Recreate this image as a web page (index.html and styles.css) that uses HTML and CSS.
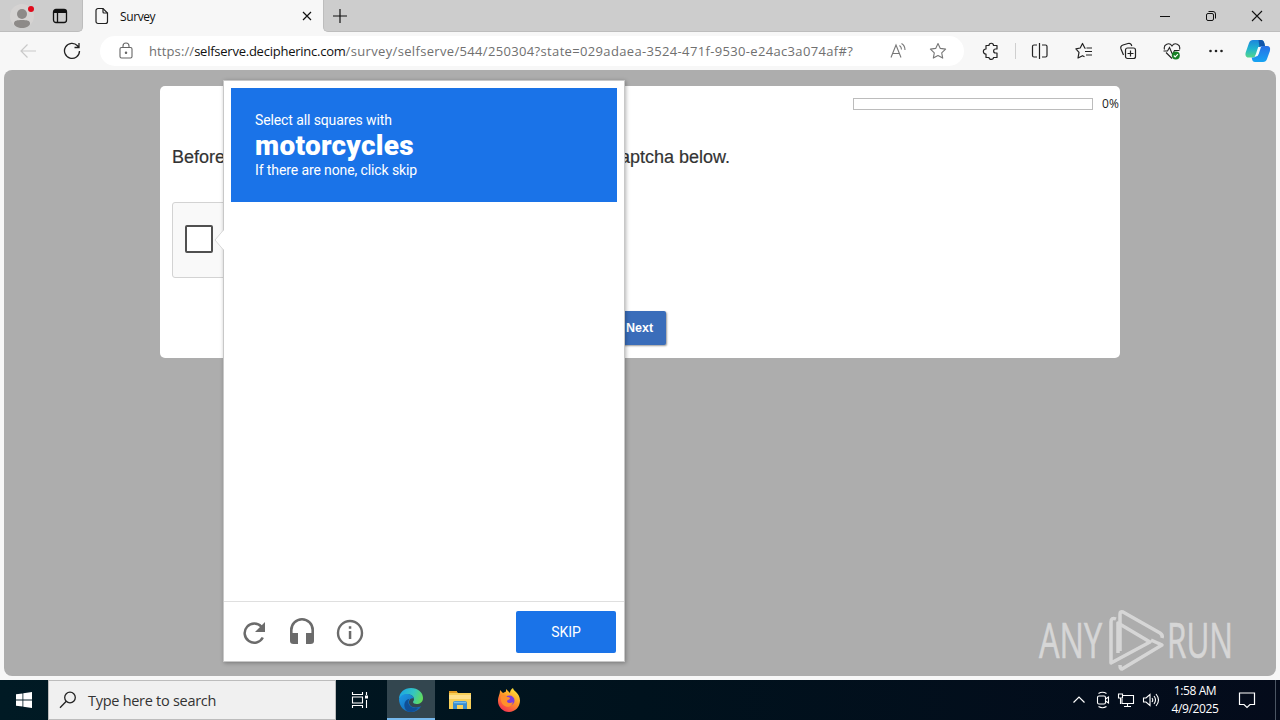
FILE: index.html
```html
<!DOCTYPE html>
<html lang="en">
<head>
    <meta charset="UTF-8">
    <meta name="viewport" content="width=device-width, initial-scale=1.0">
    <title>Survey</title>
    <link rel="stylesheet" href="styles.css">
</head>
<body>
<div class="screen">

    <div class="tabbar">
        <div class="tab-left">
            <svg class="profile" width="28" height="30" viewBox="0 0 28 30">
                <circle cx="14" cy="15" r="12" fill="#d5d3d2"/>
                <circle cx="14" cy="13" r="5" fill="#8d8a88"/>
                <path d="M6 22.500C6 19.500 9 19 14 19s8 .5 8 3.500c0 2.500-4 4.500-8 4.500s-8-2-8-4.500z" fill="#8d8a88"/>
                <circle cx="23" cy="8" r="3" fill="#e00b1c"/>
            </svg>
            <svg width="16" height="16" viewBox="0 0 16 16" fill="none" stroke="#111" stroke-width="1.300">
                <rect x="1.500" y="1.500" width="13" height="13" rx="2.500"/>
                <path d="M2 3.500h12" stroke-width="3"/>
                <path d="M5.500 4v10"/>
            </svg>
        </div>
        <div class="tab">
            <svg width="14" height="18" viewBox="0 0 14 18" fill="none" stroke="#222" stroke-width="1.200">
                <path d="M3 1.500h5l4.500 4.500v8.500a2 2 0 0 1-2 2H3a2 2 0 0 1-2-2v-11a2 2 0 0 1 2-2z"/>
                <path d="M8 1.500V5a1 1 0 0 0 1 1h3.500"/>
            </svg>
            <span class="tab-title">Survey</span>
            <svg width="10" height="10" viewBox="0 0 10 10" stroke="#111" stroke-width="1.200"><path d="M1 1l8 8M9 1l-8 8"/></svg>
        </div>
        <div class="tab-rest">
            <svg class="new-tab" width="14" height="14" viewBox="0 0 14 14" stroke="#111" stroke-width="1.200"><path d="M7 0v14M0 7h14"/></svg>
            <div class="window-buttons">
                <svg width="12" height="12" viewBox="0 0 12 12" stroke="#111"><path d="M1 6.500h10"/></svg>
                <svg width="12" height="12" viewBox="0 0 12 12" fill="none" stroke="#111"><rect x="1.500" y="3.500" width="7" height="7" rx="1.500"/><path d="M3.500 1.500h4.500a2.500 2.500 0 0 1 2.500 2.500v4.500"/></svg>
                <svg width="12" height="12" viewBox="0 0 12 12" stroke="#111" stroke-width="1.100"><path d="M1 1l10 10M11 1L1 11"/></svg>
            </div>
        </div>
    </div>

    <div class="toolbar">
        <div class="tool"><svg width="18" height="18" viewBox="0 0 18 18" fill="none" stroke="#c9c9c9" stroke-width="1.200"><path d="M17 9H2M8.500 2.500L2 9l6.500 6.500"/></svg></div>
        <div class="tool"><svg width="18" height="18" viewBox="0 0 18 18" fill="none" stroke="#222" stroke-width="1.300"><path d="M16.500 9A7.500 7.500 0 1 1 14.500 3.800L16 5.500M16 1v4.500h-4.500"/></svg></div>
        <div class="address">
            <svg width="14" height="17" viewBox="0 0 14 17" fill="none" stroke="#666" stroke-width="1.100"><rect x="1" y="5.500" width="12" height="10.500" rx="1.500"/><path d="M4 5.500V4a3 3 0 0 1 6 0v1.500"/><circle cx="7" cy="10.700" r=".7" fill="#666"/></svg>
            <div class="url"><span class="url-scheme">https://</span><span class="url-host">selfserve.decipherinc.com</span><span class="url-path">/survey/selfserve/544/250304?state=029adaea-3524-471f-9530-e24ac3a074af#?</span></div>
            <svg class="read" width="18" height="18" viewBox="0 0 18 18" fill="none" stroke="#777" stroke-width="1.100"><path d="M2 15.500L7 3l5 12.500M3.700 11.500h6.600M10.500 3.500q2 1.500 2 4M12.500 1.500q3.500 2 3.500 6.500"/></svg>
            <svg class="star" width="18" height="18" viewBox="0 0 18 18" fill="none" stroke="#777" stroke-width="1.100" stroke-linejoin="round"><path d="M9 1.500l2.300 4.900 5.300.7-3.900 3.700 1 5.300L9 13.500l-4.700 2.600 1-5.300L1.400 7.100l5.300-.7z"/></svg>
        </div>
        <div class="tool first"><svg width="18" height="18" viewBox="0 0 18 18" fill="none" stroke="#222" stroke-width="1.200" stroke-linejoin="round"><path d="M4 3.500h3c0-3 4.500-3 4.500 0H15V7h-1.500c-2.500 0-2.500 4 0 4H15v4.500h-3.500c0 2.500-4.500 2.500-4.500 0H4V12C.500 12 .500 7 4 7z"/></svg></div>
        <div class="divider"></div>
        <div class="tool"><svg width="18" height="18" viewBox="0 0 18 18" fill="none" stroke="#222" stroke-width="1.200"><path d="M8.500 1v16M6 3H3a1.500 1.500 0 0 0-1.500 1.500v9A1.500 1.500 0 0 0 3 15h3M11 3h3.500A1.500 1.500 0 0 1 16 4.500v9a1.500 1.500 0 0 1-1.500 1.500H11"/></svg></div>
        <div class="tool"><svg width="18" height="18" viewBox="0 0 18 18" fill="none" stroke="#222" stroke-width="1.200" stroke-linejoin="round"><path d="M10.500 6.500L9.800 6 7.500 1.500 5.200 6 .9 6.800 4 10.300l-1 5.700 4.500-2.300 2 1M11.500 6H17M10 9.500h7M11 13h6"/></svg></div>
        <div class="tool"><svg width="18" height="18" viewBox="0 0 18 18" fill="none" stroke="#222" stroke-width="1.200"><rect x="6.500" y="6" width="10" height="10.500" rx="2"/><path d="M11.500 8.500v6M8.500 11.500h6M4.500 13L2 7Q1 4 4 3l5-1.500q3-.8 3.800 2.500"/></svg></div>
        <div class="tool"><svg width="18" height="18" viewBox="0 0 18 18" fill="none" stroke="#222" stroke-width="1.100"><path d="M1.500 7.500C0 2 6.500 0 9 4c2.500-4 9-2 7.500 3.500M3 10.500l6 6M.500 9h4l2-3.500 3 7 2-4h5"/><circle cx="12.800" cy="13.500" r="4" fill="#168025" stroke="none"/><path d="M10.800 13.500l1.400 1.400 2.700-2.800" stroke="#fff"/></svg></div>
        <div class="tool"><svg width="18" height="18" viewBox="0 0 18 18" fill="#222"><circle cx="3.500" cy="9" r="1.300"/><circle cx="9" cy="9" r="1.300"/><circle cx="14.500" cy="9" r="1.300"/></svg></div>
        <div class="tool copilot">
            <svg width="26" height="24" viewBox="0 0 26 24">
                <defs>
                    <linearGradient id="cp1" x1="0" y1="0" x2="0" y2="1"><stop offset="0" stop-color="#1d86dc"/><stop offset=".5" stop-color="#20b4cf"/><stop offset="1" stop-color="#55d68b"/></linearGradient>
                    <linearGradient id="cp2" x1="0" y1="0" x2="0" y2="1"><stop offset="0" stop-color="#2870e6"/><stop offset="1" stop-color="#16a4f2"/></linearGradient>
                </defs>
                <path d="M8 1h8q2.500 0 3.300 3l.7 3h-2.500q-3 0-4 3l-2 6q-.8 2.500-3.500 2.500H4q-4.500 0-3.300-5L4 4Q5 1 8 1z" fill="url(#cp1)"/>
                <path d="M18 23h-8q-2.500 0-3-3l-.3-1.500H8q3 0 4-3l2-6Q15 7 17.500 7H22q4 0 2.900 5L22 20q-1 3-4 3z" fill="url(#cp2)"/>
                <path d="M13.500 1H16q2.500 0 3.300 3l.7 3h-2.500q-2 0-3 1.300z" fill="#1356a9"/>
                <path d="M13.200 8H16l-2.300 7q-.8 2.500-3 2.500H9.500q.8-.8 1.200-2z" fill="#f5fbff"/>
            </svg>
        </div>
    </div>

    <div class="page">
        <div class="survey">
            <div class="progress">
                <div class="progress-bar"></div>
                <span>0%</span>
            </div>
            <div class="question"><span>Before</span><span>captcha below.</span></div>
            <div class="recaptcha"><div class="checkbox"></div></div>
            <div class="buttons"><div class="next">Next</div></div>
        </div>

        <div class="challenge">
            <svg class="arrow" width="10" height="20" viewBox="0 0 10 20"><path d="M10 0L1 10l9 10z" fill="#fff"/><path d="M9.500 0L1 10l8.500 10" fill="none" stroke="#d9d9d9"/></svg>
            <div class="challenge-head">
                <div>Select all squares with</div>
                <strong>motorcycles</strong>
                <div>If there are none, click skip</div>
            </div>
            <div class="challenge-body"></div>
            <div class="challenge-foot">
                <svg width="32" height="32" viewBox="0 0 32 32"><path d="M24.800 20.500A9.600 9.600 0 1 1 23.500 9.800" fill="none" stroke="#6b6b6b" stroke-width="2.500"/><path d="M27 5v10H17z" fill="#6b6b6b"/></svg>
                <svg width="32" height="32" viewBox="0 0 32 32"><path d="M5.300 17v-4a10.700 10.700 0 0 1 21.400 0v4" fill="none" stroke="#6b6b6b" stroke-width="2.600"/><path d="M4 16h8v11H7.500Q4 27 4 24zM20 16h8v8q0 3-3.500 3H20z" fill="#6b6b6b"/></svg>
                <svg width="32" height="32" viewBox="0 0 32 32"><circle cx="16" cy="16" r="12" fill="none" stroke="#6b6b6b" stroke-width="2.400"/><path d="M14.800 14h2.500v8h-2.500zM14.800 9.300h2.500v2.500h-2.500z" fill="#6b6b6b"/></svg>
                <div class="skip">SKIP</div>
            </div>
        </div>

        <div class="watermark">
            <svg width="206" height="84" viewBox="0 -10 206 84">
                <g class="wm-text">
                    <text x="2" y="50" textLength="63" lengthAdjust="spacingAndGlyphs">ANY</text>
                    <text x="130" y="50" textLength="66" lengthAdjust="spacingAndGlyphs">RUN</text>
                </g>
                <g fill="none" stroke="#dedede" stroke-width="3.500" stroke-linejoin="round">
                    <path d="M79 11q-5-2-5 3v41l39-21-32-19v30"/>
                    <path d="M83 43V6q0-3 3-2l37 21q3 2 2 5"/>
                    <path d="M121 35l4 2-40 24q-2 0-2-4M114 32l11 5"/>
                </g>
            </svg>
        </div>
    </div>

    <div class="taskbar">
        <div class="start">
            <svg width="16" height="16" viewBox="0 0 16 16" fill="#fff"><path d="M0 2.300L6.500 1.400v6.100H0zM7.300 1.300L16 0v7.500H7.300zM0 8.400h6.500v6.200L0 13.700zM7.300 8.400H16V16l-8.700-1.300z"/></svg>
        </div>
        <div class="search">
            <svg width="18" height="18" viewBox="0 0 18 18" fill="none" stroke="#222" stroke-width="1.300"><circle cx="11" cy="6.500" r="5.300"/><path d="M7.300 10.200L1 16.700"/></svg>
            <span>Type here to search</span>
        </div>
        <div class="task">
            <svg width="18" height="16" viewBox="0 0 18 16" fill="none" stroke="#fff" stroke-width="1.100"><path d="M1.500 0v2.500h10V0M1.500 16v-2.500h10V16M1.500 5h10v6h-10zM15.500 0v3M15.500 8v8"/><path d="M14 3.500h3v3h-3z" fill="#fff" stroke="none"/></svg>
        </div>
        <div class="task active">
            <svg width="24" height="24" viewBox="0 0 24 24">
                <defs>
                    <linearGradient id="edgeTop" x1="0" y1=".3" x2="1" y2=".6"><stop offset="0" stop-color="#1aa5e5"/><stop offset=".55" stop-color="#34c5c1"/><stop offset="1" stop-color="#62dc58"/></linearGradient>
                    <linearGradient id="edgeLow" x1="0" y1="0" x2="1" y2="1"><stop offset="0" stop-color="#1c9be8"/><stop offset="1" stop-color="#135ba8"/></linearGradient>
                </defs>
                <path d="M0 11C0 4.500 5.500 0 12 0c7 0 12 4.500 12 10 0 4-3 6-6.500 6-2 0-3.500-.8-3.500-2 0-.7 1-1.200 1-3 0-2.500-2.500-4.500-6-4.500-4 0-7.500 2-9 4.500z" fill="url(#edgeTop)"/>
                <path d="M0 11c1.500-4 5-5.500 9-5 3.500.5 5.500 2.500 6 4.500-2-1-4.500 0-5 3-.500 4.500 5 8 12.300 4.500C20 22 16.500 24 12 24 5 24 0 18 0 11z" fill="url(#edgeLow)"/>
                <path d="M8.500 23.500C4 20 4 12 10.500 10.700 8 14 9.500 21 19 19.800 18 22 15 24 12 24z" fill="#104f96"/>
            </svg>
        </div>
        <div class="task explorer">
            <svg width="22" height="20" viewBox="0 0 22 20"><path d="M0 1h7l2 2h13v16H0z" fill="#f7cf58"/><path d="M0 1h8v2H0z" fill="#e19a20"/><path d="M0 5h22v4H0z" fill="#ffe08b"/><path d="M4 19v-6q0-2 2-2h10q2 0 2 2v6h-4v-4H8v4z" fill="#3a8dcd"/><path d="M5 12.500h12" stroke="#75bcec" stroke-width="1.500"/></svg>
        </div>
        <div class="task">
            <svg width="24" height="24" viewBox="0 0 24 24">
                <defs><linearGradient id="fox" x1=".8" y1="0" x2=".2" y2="1"><stop offset="0" stop-color="#ffec3c"/><stop offset=".45" stop-color="#ff9827"/><stop offset="1" stop-color="#f32a55"/></linearGradient></defs>
                <path d="M3 2l3 3 3-1.500V1l4 4c0-2 1-4 3-5 0 3 7 5 7 12.500C23 19 18 24 12 24S1 19 1 13C1 8 3 7 3 2z" fill="url(#fox)"/>
                <circle cx="12.500" cy="12.500" r="5" fill="#7b3edb"/>
                <path d="M4 8c3-2 5-1 6 1 2 0 3 .5 3 1.500-1 2-3 1-3 3 1 2 4 2 6 .5-1 4-4 5.500-7 4.500-4-1-6-6-5-10.500z" fill="#ff902c"/>
            </svg>
        </div>
        <div class="tray">
            <svg width="14" height="10" viewBox="0 0 14 10" fill="none" stroke="#fff" stroke-width="1.200"><path d="M1.500 7.500L7 2l5.500 5.500"/></svg>
            <svg class="camera" width="14" height="18" viewBox="0 0 14 18" fill="none" stroke="#fff" stroke-width="1.100"><rect x="1.500" y="5" width="8" height="8" rx="1.500"/><path d="M9.500 8l3-2v6l-3-2M2.500 2.500q4-2.500 8 0M2.500 15.500q4 2.500 8 0"/></svg>
            <svg width="18" height="16" viewBox="0 0 18 16" fill="none" stroke="#fff" stroke-width="1.100"><path d="M6 3.500h10.500v8H5V7M10.500 11.500v3M7 14.500h7"/><path d="M1.500 2h4v4h-4zM3.500 6v6"/></svg>
            <svg width="18" height="16" viewBox="0 0 18 16" fill="none" stroke="#fff" stroke-width="1.100"><path d="M1.500 6H4l4-3.500v11L4 10H1.500zM10 6q1.500 2 0 4M12 4q3 4 0 8M14 2q5 6 0 12"/></svg>
        </div>
        <div class="clock"><div>1:58 AM</div><div>4/9/2025</div></div>
        <svg class="notice" width="18" height="18" viewBox="0 0 18 18" fill="none" stroke="#fff" stroke-width="1.200"><path d="M1.500 2h15v11.500H12l-3 3-3-3H1.500z"/></svg>
        <div class="show-desktop"></div>
    </div>

</div>
</body>
</html>
```
FILE: styles.css
```css
body {
    margin: 0;
    font-family: 'Open Sans', 'Noto Sans', sans-serif;
    color: #222;
}

svg {
    display: block;
    flex: none;
}

.screen {
    width: 1280px;
    height: 720px;
    overflow: hidden;
    display: flex;
    flex-direction: column;
    background-color: #f7f7f7;
}

/* tab strip */
.tabbar {
    height: 32px;
    display: flex;
    align-items: center;
    background-color: #f7f7f7;
}

.tab-left {
    box-sizing: border-box;
    width: 83px;
    height: 32px;
    padding-left: 8px;
    display: flex;
    align-items: center;
    gap: 16px;
    background-color: #cdcdcd;
    border-bottom: 1px solid #bdbdbd;
    border-right: 1px solid #bdbdbd;
    border-radius: 0 0 5px 0;
}

.tab {
    box-sizing: border-box;
    width: 240px;
    height: 32px;
    padding: 0 11px 0 12px;
    display: flex;
    align-items: center;
}

.tab-title {
    flex: 1;
    margin-left: 11px;
    font-size: 12px;
    letter-spacing: -0.4px;
    color: #111;
}

.tab-rest {
    box-sizing: border-box;
    flex: 1;
    height: 32px;
    padding-left: 9px;
    display: flex;
    align-items: center;
    background-color: #cdcdcd;
    border-left: 1px solid #bdbdbd;
    border-bottom: 1px solid #bdbdbd;
    border-radius: 0 0 0 5px;
}

.window-buttons {
    margin-left: auto;
    width: 138px;
    display: flex;
    justify-content: space-around;
}

/* toolbar */
.toolbar {
    height: 38px;
    padding: 0 0 1px 6px;
    display: flex;
    align-items: center;
    box-sizing: border-box;
}

.tool {
    width: 44px;
    display: flex;
    justify-content: center;
}

.tool.first {
    margin-left: 5px;
}

.tool.copilot {
    width: 40px;
}

.divider {
    width: 1px;
    height: 16px;
    margin: 0 2px;
    background-color: #cfcfcf;
}

.address {
    box-sizing: border-box;
    width: 864px;
    height: 30px;
    margin-left: 6px;
    padding: 0 17px 0 19px;
    display: flex;
    align-items: center;
    background-color: #fff;
    border-radius: 15px;
}

.url {
    flex: 1;
    margin-left: 16px;
    font-size: 13px;
    white-space: nowrap;
    color: #707070;
}

.url-host {
    letter-spacing: -0.24px;
    color: #111;
}

.url-scheme {
    letter-spacing: 0.1px;
}

.url-path {
    letter-spacing: 0.34px;
}

.star {
    margin-left: 22px;
}

/* page */
.page {
    position: relative;
    box-sizing: border-box;
    height: 606px;
    margin: 0 4px 4px;
    padding-top: 16px;
    background-color: #adadad;
    border-radius: 8px;
}

.survey {
    box-sizing: border-box;
    width: 960px;
    height: 272px;
    margin: 0 auto;
    padding: 10px 0 0 12px;
    background-color: #fff;
    border-radius: 5px;
}

.progress {
    height: 16px;
    display: flex;
    align-items: center;
    justify-content: flex-end;
    gap: 9px;
    font-size: 12px;
}

.progress span {
    width: 18px;
    padding-bottom: 2px;
    letter-spacing: 0.2px;
    white-space: nowrap;
}

.progress-bar {
    box-sizing: border-box;
    width: 240px;
    height: 12px;
    border: 1px solid #bcbcbc;
}

.question {
    width: 558px;
    margin-top: 34px;
    display: flex;
    justify-content: space-between;
    font: 18px/22px 'Liberation Sans', Arial, sans-serif;
    color: #333;
    -webkit-text-stroke: 0.2px #333;
}

.recaptcha {
    box-sizing: border-box;
    width: 304px;
    height: 76px;
    margin-top: 34px;
    padding: 22px 12px;
    background-color: #f9f9f9;
    border: 1px solid #d3d3d3;
    border-radius: 3px;
}

.checkbox {
    box-sizing: border-box;
    width: 28px;
    height: 28px;
    background-color: #fff;
    border: 2px solid #505050;
    border-radius: 2px;
}

.buttons {
    margin-top: 33px;
    padding-right: 13px;
    display: flex;
    justify-content: center;
}

.next {
    width: 53px;
    height: 34px;
    font: bold 12.500px/35px 'Liberation Sans', Arial, sans-serif;
    text-align: center;
    color: #fff;
    background-color: #3a6dba;
    border-radius: 2px;
    box-shadow: 1px 1px 2px rgba(0, 0, 0, 0.4);
}

/* captcha popup over the page */
.challenge {
    position: absolute;
    box-sizing: border-box;
    left: 219px;
    top: 10px;
    width: 402px;
    height: 582px;
    display: flex;
    flex-direction: column;
    background-color: #fff;
    border: 1px solid #c8c8c8;
    box-shadow: 1px 1px 4px rgba(0, 0, 0, 0.3);
    font-family: Roboto, sans-serif;
}

.arrow {
    position: absolute;
    left: -10px;
    top: 149px;
}

.challenge-head {
    box-sizing: border-box;
    height: 114px;
    margin: 7px 7px 0;
    padding: 24px;
    font-size: 14px;
    line-height: 16px;
    letter-spacing: -0.11px;
    color: #fff;
    background-color: #1a73e8;
}

.challenge-head strong {
    display: block;
    font-size: 28px;
    font-weight: 900;
    line-height: 34px;
    padding-top: 1px;
    margin-bottom: -1px;
    letter-spacing: 0.27px;
}

.challenge-body {
    flex: 1;
}

.challenge-foot {
    box-sizing: border-box;
    height: 60px;
    padding: 0 8px 0 14px;
    display: flex;
    align-items: center;
    gap: 16px;
    border-top: 1px solid #dfdfdf;
}

.challenge-foot svg {
    margin-top: 2px;
}

.skip {
    width: 100px;
    height: 42px;
    margin-left: auto;
    font-size: 14px;
    line-height: 42px;
    text-align: center;
    color: #fff;
    background-color: #1a73e8;
    border-radius: 2px;
}

.watermark {
    position: absolute;
    left: 1033px;
    top: 528px;
    opacity: 0.85;
}

.wm-text {
    font-family: 'Open Sans', sans-serif;
    font-size: 50px;
    fill: #dedede;
    stroke: #dedede;
    stroke-width: 0.7px;
}

/* taskbar */
.taskbar {
    height: 40px;
    display: flex;
    align-items: center;
    background: linear-gradient(to right, #001a24, #00121d 50%, #040b1b);
    color: #fff;
}

.start {
    width: 48px;
    display: flex;
    justify-content: center;
}

.search {
    box-sizing: border-box;
    width: 288px;
    height: 40px;
    padding-left: 10px;
    display: flex;
    align-items: center;
    gap: 11px;
    font-size: 14.500px;
    letter-spacing: -0.28px;
    color: #333;
    background-color: #f0f0f0;
    border: 1px solid #bcbcbc;
}

.task {
    box-sizing: border-box;
    width: 48px;
    height: 40px;
    display: flex;
    align-items: center;
    justify-content: center;
}

.task.active {
    margin-left: 3px;
    padding-top: 2px;
    background-color: #33464f;
    border-bottom: 2px solid #76b9ed;
}

.explorer {
    margin: 0 1px;
}

.tray {
    margin-left: auto;
    display: flex;
    align-items: center;
    gap: 7px;
}

.camera {
    margin-left: 3px;
}

.clock {
    width: 50px;
    margin-left: 10px;
    font-size: 12px;
    line-height: 18px;
    letter-spacing: -0.4px;
    text-align: center;
    white-space: nowrap;
}

.notice {
    margin-left: 18px;
}

.show-desktop {
    width: 4px;
    height: 40px;
    margin-left: 19px;
    border-left: 1px solid #4b5563;
}
```
